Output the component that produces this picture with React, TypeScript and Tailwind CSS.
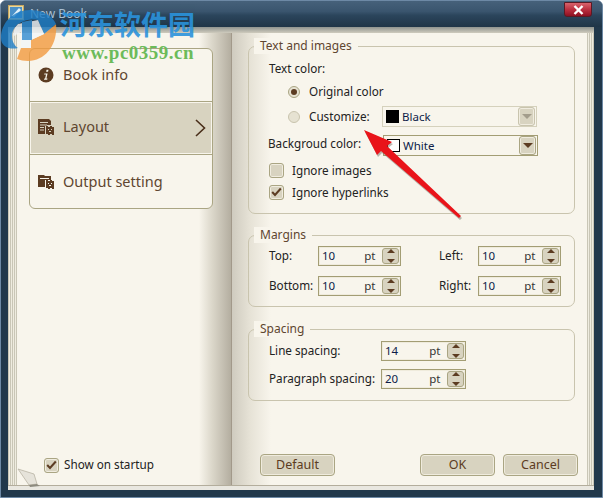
import React from "react";

const ui = "font-['Noto_Sans','DejaVu_Sans',sans-serif]";

function Group({ title, className, children }: { title: string; className: string; children: React.ReactNode }) {
  return (
    <div className={`relative w-[327px] rounded-[7px] border border-[#c9c4ae] ${className}`}>
      <span className="absolute left-[5px] top-[-9px] bg-[#f8f5ec] px-[6px] text-[12px] leading-[16px] text-[#5f4630]">{title}</span>
      {children}
    </div>
  );
}

function Spinner() {
  return (
    <div className="flex h-[16px] w-[17px] shrink-0 flex-col items-center justify-center gap-[3px] rounded-[3px] border border-[#aaa583] bg-[#d8d3c0]">
      <div className="h-0 w-0 border-x-[4px] border-b-[4px] border-x-transparent border-b-[#5c3c22]" />
      <div className="h-px w-full bg-[#f8f5ec]" />
      <div className="h-0 w-0 border-x-[4px] border-t-[4px] border-x-transparent border-t-[#5c3c22]" />
    </div>
  );
}

function Num({ v, w, gap }: { v: string; w: string; gap: string }) {
  return (
    <div className={`flex h-[20px] items-center border border-[#a39d74] bg-[#f8f5ec] pl-[3px] pr-[1px] shadow-[inset_0_0_0_1px_#efebdc] ${w}`}>
      <span className="text-[11.5px] text-[#0d1c48]">{v}</span>
      <span className={`text-[11.5px] text-[#333] ${gap}`}>pt</span>
      <div className="ml-auto"><Spinner /></div>
    </div>
  );
}

function Check({ on }: { on?: boolean }) {
  return (
    <div className="flex h-[15px] w-[15px] shrink-0 items-center justify-center rounded-[3px] border border-[#aaa583] bg-[#d8d3c0] shadow-[inset_0_0_0_1px_#f0ecdf]">
      {on && (
        <svg width="11" height="10" viewBox="0 0 11 10">
          <path d="M1.2 5 L4 8 L9.8 1.5" fill="none" stroke="#5c3c22" strokeWidth="2" />
        </svg>
      )}
    </div>
  );
}

function Select({ label, swatch, disabled }: { label: string; swatch: string; disabled?: boolean }) {
  return (
    <div className={`flex h-[21px] w-[155px] items-center border ${disabled ? "border-[#d5d1bc]" : "border-[#a39d74]"} bg-[#f8f5ec] pr-[1px]`}>
      <div className={`ml-[3px] h-[13px] w-[13px] border border-black ${swatch}`} />
      <span className="ml-[3px] text-[11.5px] text-[#0d1c48]">{label}</span>
      <div className={`ml-auto flex h-[19px] w-[17px] items-center justify-center rounded-[3px] border ${disabled ? "border-[#c9c4ae]" : "border-[#aaa583]"} bg-[#d8d3c0] shadow-[inset_0_0_0_1px_#f0ecdf]`}>
        <div className={`h-0 w-0 border-x-[5px] border-t-[5px] border-x-transparent ${disabled ? "border-t-[#a39d8c]" : "border-t-[#5c3c22]"}`} />
      </div>
    </div>
  );
}

function Radio({ on }: { on?: boolean }) {
  return (
    <div className={`flex h-[12px] w-[12px] items-center justify-center rounded-full border ${on ? "border-[#aaa583]" : "border-[#c9c4ae]"} bg-[#e6e2d2]`}>
      {on && <div className="h-[6px] w-[6px] rounded-full bg-[#5c3c22]" />}
    </div>
  );
}

function Btn({ label, className = "" }: { label: string; className?: string }) {
  return (
    <div className={`flex h-[22px] w-[75px] items-center justify-center rounded-[4px] border border-[#aaa583] bg-[#d8d3c0] text-[12.5px] text-[#5c3c22] shadow-[inset_0_0_0_1px_#efebdd] ${className}`}>
      {label}
    </div>
  );
}

function Gear({ x, y }: { x: number; y: number }) {
  return (
    <g transform={`translate(${x} ${y})`}>
      <path fillRule="evenodd" fill="#5c3c22" d="M0 0h2v1h2V0h2v1h2v7H8v1H6V8H4v1H2V8H0V1zM2 3v1h1V3zM5 3v1h1V3zM3 5v1h2V5z" />
    </g>
  );
}

function Nav({ label, icon, active }: { label: string; icon: React.ReactNode; active?: boolean }) {
  return (
    <div className={`flex items-center ${active ? "mx-px my-px h-[50px] bg-[#d8d3c0] pb-[3px] pl-[7px]" : "h-[52px] pl-[8px]"}`}>
      <div className="flex w-[25px] justify-start">{icon}</div>
      <span className="text-[14.5px] text-[#5f4630]">{label}</span>
      {active && (
        <svg className="ml-auto mr-[5px] mt-[2px]" width="11" height="18" viewBox="0 0 11 18">
          <path d="M1 1 L9.5 9 L1 17" fill="none" stroke="#4a2f1a" strokeWidth="1.6" />
        </svg>
      )}
    </div>
  );
}

export default function App() {
  return (
    <div className={`relative flex h-[498px] w-[603px] flex-col overflow-hidden rounded-t-[6px] border border-[#6d89a5] bg-[#21384b] ${ui}`}>
      {/* Title bar */}
      <div className="flex h-[26px] shrink-0 items-center bg-[linear-gradient(180deg,#46617a_0%,#3a556e_40%,#2b455c_55%,#1f3547_100%)] pl-[7px]">
        <svg width="16" height="16" viewBox="0 0 16 16" className="mb-[2px]">
          <rect x="0.5" y="0.5" width="15" height="14" fill="#e8d9a0" stroke="#c9a860" />
          <rect x="2" y="2" width="12" height="11" fill="#4a90c8" />
          <path d="M4 11 L11 3 L13 5 L6 12z" fill="#dff0fa" />
        </svg>
        <span className="ml-[6px] text-[12px] text-[#a9c0d4]">New Book</span>
        <div className="ml-auto mb-[9px] mr-[10px] flex h-[15px] w-[28px] items-center justify-center rounded-b-[3px] border border-[#5a1a24] bg-[linear-gradient(180deg,#d8636c_0%,#bb3040_50%,#8e1022_100%)]">
          <svg width="11" height="10" viewBox="0 0 11 10">
            <path d="M1.5 1 L9.5 9 M9.5 1 L1.5 9" stroke="#fff" strokeWidth="2.4" />
          </svg>
        </div>
      </div>

      {/* Book */}
      <div className="flex min-h-0 flex-1 flex-col pl-[7px] pr-[8px]">
        <div className="h-[6px] shrink-0 bg-[linear-gradient(180deg,#8f948f,#cfcbbd)]" />
        <div className="flex min-h-0 flex-1">
          <div className="w-[9px] shrink-0 bg-[repeating-linear-gradient(90deg,#c9c6b6_0px,#c9c6b6_1px,#efece0_1px,#efece0_2px)]" />

          {/* Left page */}
          <div className="relative flex w-[214px] shrink-0 flex-col justify-between bg-[linear-gradient(90deg,#f8f5ec_0%,#f8f5ec_85%,#dcd8cb_91%,#b4aea0_100%)] pb-[11px] pl-[12px] pt-[15px]">
            <div className="w-[184px] overflow-hidden rounded-[6px] border border-[#aaa583] bg-[#f8f5ec]">
              <Nav
                label="Book info"
                icon={
                  <svg width="16" height="16" viewBox="0 0 16 16">
                    <circle cx="8" cy="8" r="7.5" fill="#5c3c22" />
                    <path d="M8.5 2.8h2l-.4 2h-2zM6.4 6.4h3.2l-1.2 5.2h1.1l-.3 1.2H6l.3-1.2h.8l.9-4H6.1z" fill="#f8f5ec" />
                  </svg>
                }
              />
              <div className="h-px bg-[#aaa583]" />
              <Nav
                active
                label="Layout"
                icon={
                  <svg width="16" height="16" viewBox="0 0 16 16">
                    <path fillRule="evenodd" fill="#5c3c22" d="M0 0h11l2 2v4H7v9H0zM2 3v1h8V3zM2 5.500v1h7v-1zM2 8v1h4V8zM2 10.500v1h4v-1z" />
                    <Gear x={8} y={7} />
                  </svg>
                }
              />
              <div className="h-px bg-[#aaa583]" />
              <div className="pt-[1px]">
                <Nav
                  label="Output setting"
                  icon={
                    <svg width="16" height="16" viewBox="0 0 16 16">
                      <path fillRule="evenodd" fill="#5c3c22" d="M0 1h6l1 1h6v4H7v7H0zM2 4v1h9V4z" />
                      <Gear x={8} y={6} />
                    </svg>
                  }
                />
              </div>
            </div>
            <div className="flex items-center gap-[5px] pl-[15px]">
              <Check on />
              <span className="text-[11.7px] text-[#222]">Show on startup</span>
            </div>
            <svg className="absolute bottom-[-2px] left-0" width="24" height="20" viewBox="0 0 24 20">
              <path d="M1 2 L17 7 L20 17 L12 18z" fill="#e6e3da" stroke="#b9b4a4" strokeWidth="0.8" />
              <path d="M12 18 L20 17 L23 19 L13 20z" fill="#8d8a7e" />
            </svg>
          </div>

          <div className="w-px shrink-0 bg-[#a2998a]" />

          {/* Right page */}
          <div className="flex flex-1 flex-col bg-[linear-gradient(90deg,#cfcbbf_0%,#e6e2d6_5%,#f8f5ec_11%)] pl-[16px] pt-[13px] text-[#222]">
            <Group title="Text and images" className="h-[168px] shrink-0 pl-[20px] pt-[13px]">
              <div className="text-[11.7px] leading-[16px]">Text color:</div>
              <div className="mt-[8px] flex h-[16px] items-center pl-[19px]">
                <Radio on />
                <span className="ml-[9px] text-[11.7px]">Original color</span>
              </div>
              <div className="mt-[6px] flex items-center pl-[19px]">
                <Radio />
                <span className="ml-[9px] w-[73px] text-[11.7px]">Customize:</span>
                <Select label="Black" swatch="bg-black" disabled />
              </div>
              <div className="mt-[8px] flex items-center">
                <span className="ml-[-1px] mb-[3px] w-[115px] text-[11.7px]">Backgroud color:</span>
                <Select label="White" swatch="bg-white" />
              </div>
              <div className="mt-[6px] flex items-center gap-[8px]">
                <Check />
                <span className="text-[11.7px]">Ignore images</span>
              </div>
              <div className="mt-[4px] flex items-center gap-[8px]">
                <Check on />
                <span className="text-[11.7px]">Ignore hyperlinks</span>
              </div>
            </Group>

            <Group title="Margins" className="mt-[21px] h-[72px] shrink-0 pl-[20px] pt-[10px]">
              <div className="grid grid-cols-[49px_83px_38px_84px] grid-rows-[20px_20px] items-center gap-y-[10px] text-[11.7px]">
                <span>Top:</span>
                <Num v="10" w="w-[83px]" gap="ml-[29px]" />
                <span className="ml-[38px] w-[38px]">Left:</span>
                <div className="ml-[39px]"><Num v="10" w="w-[83px]" gap="ml-[29px]" /></div>
                <span>Bottom:</span>
                <Num v="10" w="w-[83px]" gap="ml-[29px]" />
                <span className="ml-[38px] w-[38px]">Right:</span>
                <div className="ml-[39px]"><Num v="10" w="w-[83px]" gap="ml-[29px]" /></div>
              </div>
            </Group>

            <Group title="Spacing" className="mt-[22px] h-[72px] shrink-0 pl-[20px] pt-[11px]">
              <div className="grid grid-cols-[112px_85px] grid-rows-[20px_20px] items-center gap-y-[8px] text-[11.7px]">
                <span>Line spacing:</span>
                <Num v="14" w="w-[85px]" gap="ml-[31px]" />
                <span>Paragraph spacing:</span>
                <Num v="20" w="w-[85px]" gap="ml-[31px]" />
              </div>
            </Group>

            <div className="mt-auto mb-[9px] flex pl-[12px]">
              <Btn label="Default" />
              <Btn label="OK" className="ml-[85px]" />
              <Btn label="Cancel" className="ml-[8px]" />
            </div>
          </div>

          <div className="w-[7px] shrink-0 bg-[repeating-linear-gradient(90deg,#c9c6b6_0px,#c9c6b6_1px,#efece0_1px,#efece0_2px)]" />
        </div>
        <div className="h-[1px] shrink-0 bg-[#b3ad9c]" />
        <div className="h-[4px] shrink-0 bg-[#e9e7e0]" />
      </div>
      <div className="h-[7px] shrink-0" />

      {/* Watermark overlay */}
      <div className="pointer-events-none absolute left-[-1px] top-[-1px]">
        <svg width="60" height="64" viewBox="0 0 60 64" className="absolute left-0 top-0 opacity-80">
          <path d="M56 24 C58 44 46 61 28 61 C24 61 20 60 17 59 L21 48 L31 48 L31 40 L44 34 Z" fill="#f39b3f" />
          <path d="M1 38 C1 22 14 10 30 10 C42 10 52 15 56 24 L44 34 L38 20 C26 18 12 24 12 36 C12 42 15 46 18 48 C10 50 1 47 1 38Z" fill="#1f7fc8" />
          <path d="M18 24 L38 20 L44 34 L31 40 L31 48 L21 48 L21 32 L14 36 C13 30 15 27 18 24Z" fill="#f3f6f8" />
          <path d="M22 22 L32 20 L32 40 L22 40 Z" fill="#2f8bd2" />
        </svg>
        <span className="absolute left-[60px] top-[5px] whitespace-nowrap font-['Noto_Sans_CJK_SC',sans-serif] text-[27px] font-bold leading-[38px] text-[#2b93dc] opacity-90">河东软件园</span>
        <span className="absolute left-[62px] top-[42px] whitespace-nowrap font-['Liberation_Serif',serif] text-[19px] font-bold leading-[22px] tracking-[0.5px] text-[#6cbb5a]">www.pc0359.cn</span>
      </div>

      {/* Annotation arrow */}
      <svg className="pointer-events-none absolute left-[-1px] top-[-1px]" width="603" height="498" viewBox="0 0 603 498">
        <path d="M364 130 L392 142 L387 146 L461 216 L459 218 L381 151 L377 155 Z" fill="#6b6459" opacity="0.45" transform="translate(1 2)" />
        <path d="M364 130 L392 142 L387 146 L461 216 L459 218 L381 151 L377 155 Z" fill="#e9141a" />
      </svg>
    </div>
  );
}
